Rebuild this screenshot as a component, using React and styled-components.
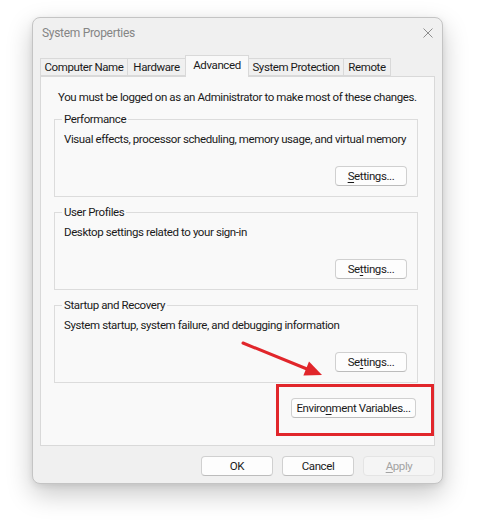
import React from 'react'
import styled, { createGlobalStyle } from 'styled-components'

const GlobalStyle = createGlobalStyle`
  html, body {
    margin: 0;
    padding: 0;
    background: #ffffff;
  }
  body {
    font-family: Roboto, "Liberation Sans", Arial, sans-serif;
    font-size: 11.5px;
    letter-spacing: -0.4px;
    color: #1a1a1a;
  }
`

const Page = styled.div`
  width: 483px;
  height: 531px;
  padding: 17px 0 0 32px;
  box-sizing: border-box;
  overflow: hidden;
`

const Window = styled.div`
  width: 411px;
  height: 467px;
  box-sizing: border-box;
  border: 1px solid #c4c4c4;
  border-radius: 8px;
  background: #f0f0f0;
  box-shadow: 0 10px 26px rgba(0, 0, 0, 0.22), 0 2px 6px rgba(0, 0, 0, 0.08);
  display: flex;
  flex-direction: column;
`

const TitleBar = styled.div`
  height: 30px;
  display: flex;
  align-items: center;
  justify-content: space-between;
  padding: 0 9px 0 9px;
`

const Title = styled.span`
  color: #858585;
  font-size: 12px;
  letter-spacing: -0.3px;
`

const Close = styled.svg`
  width: 10px;
  height: 10px;
  stroke: #8e8e8e;
  stroke-width: 1;
`

const TabRow = styled.div`
  margin: 7px 0 0 8px;
  height: 21px;
  display: flex;
  align-items: flex-end;
`

const Tab = styled.div`
  width: ${p => p.$w}px;
  height: ${p => (p.$active ? 22 : 18)}px;
  box-sizing: border-box;
  margin-bottom: ${p => (p.$active ? -1 : 0)}px;
  margin-left: -1px;
  border: 1px solid #d9d9d9;
  border-bottom: ${p => (p.$active ? 'none' : '1px solid #d9d9d9')};
  background: ${p => (p.$active ? '#f9f9f9' : '#f0f0f0')};
  display: flex;
  align-items: center;
  justify-content: center;
  padding-bottom: ${p => (p.$active ? 3 : 0)}px;
  position: relative;
  z-index: ${p => (p.$active ? 2 : 0)};
  white-space: nowrap;
`

const Panel = styled.div`
  margin-left: 7px;
  width: 395px;
  height: 370px;
  box-sizing: border-box;
  border: 1px solid #d9d9d9;
  background: #f9f9f9;
  padding: 12px 0 0 13px;
  position: relative;
`

const Intro = styled.div`
  line-height: 16px;
  padding-left: 4px;
  margin-bottom: 6px;
  white-space: nowrap;
`

const Group = styled.fieldset`
  width: 364px;
  box-sizing: border-box;
  margin: 0 0 7px 0;
  padding: 0 10px 10px 9px;
  border: 1px solid #dcdcdc;
  min-width: 0;
`

const Legend = styled.legend`
  line-height: 16px;
  padding: 0 2px;
  margin-left: -2px;
`

const Desc = styled.div`
  line-height: 16px;
  margin-top: 4px;
  white-space: nowrap;
`

const ButtonRow = styled.div`
  display: flex;
  justify-content: flex-end;
  margin-top: ${p => p.$top || 0}px;
  padding-right: ${p => p.$right || 0}px;
`

const Button = styled.button`
  width: ${p => p.$w || 72}px;
  height: 20px;
  box-sizing: border-box;
  border: 1px solid ${p => (p.disabled ? '#e4e4e4' : '#d0d0d0')};
  border-bottom-color: ${p => (p.disabled ? '#e4e4e4' : '#bcbcbc')};
  border-radius: 4px;
  background: ${p => (p.disabled ? '#f5f5f5' : '#fdfdfd')};
  color: ${p => (p.disabled ? '#a3a3a3' : '#1a1a1a')};
  font-family: inherit;
  font-size: inherit;
  letter-spacing: inherit;
  padding: 0;
  line-height: 16px;
  white-space: nowrap;
`

const U = styled.span`
  text-decoration: underline;
  text-underline-offset: 2px;
`

const Highlight = styled.div`
  position: absolute;
  left: 235px;
  top: 307px;
  width: 158px;
  height: 52px;
  box-sizing: border-box;
  border: 3px solid #e1262b;
  pointer-events: none;
`

const Arrow = styled.svg`
  position: absolute;
  left: 199px;
  top: 261px;
  width: 90px;
  height: 45px;
  overflow: visible;
`

const Footer = styled.div`
  display: flex;
  justify-content: flex-end;
  gap: 9px;
  margin-top: 10px;
  padding-right: 7px;
`

const groups = [
  {
    title: 'Performance',
    desc: 'Visual effects, processor scheduling, memory usage, and virtual memory',
    btn: <><U>S</U>ettings...</>,
  },
  {
    title: 'User Profiles',
    desc: 'Desktop settings related to your sign-in',
    btn: <>Se<U>t</U>tings...</>,
  },
  {
    title: 'Startup and Recovery',
    desc: 'System startup, system failure, and debugging information',
    btn: <>Se<U>t</U>tings...</>,
  },
]

const tabs = [
  { label: 'Computer Name', w: 88 },
  { label: 'Hardware', w: 59 },
  { label: 'Advanced', w: 64, active: true },
  { label: 'System Protection', w: 96 },
  { label: 'Remote', w: 48 },
]

export default function App() {
  return (
    <>
      <GlobalStyle />
      <Page>
        <Window>
          <TitleBar>
            <Title>System Properties</Title>
            <Close viewBox="0 0 10 10">
              <path d="M0.5 0.5 L9.5 9.5 M9.5 0.5 L0.5 9.5" />
            </Close>
          </TitleBar>
          <TabRow>
            {tabs.map(t => (
              <Tab key={t.label} $w={t.w} $active={t.active}>{t.label}</Tab>
            ))}
          </TabRow>
          <Panel>
            <Intro>You must be logged on as an Administrator to make most of these changes.</Intro>
            {groups.map(g => (
              <Group key={g.title}>
                <Legend>{g.title}</Legend>
                <Desc>{g.desc}</Desc>
                <ButtonRow $top={19}>
                  <Button>{g.btn}</Button>
                </ButtonRow>
              </Group>
            ))}
            <ButtonRow $top={15} $right={18}>
              <Button $w={125}>Enviro<U>n</U>ment Variables...</Button>
            </ButtonRow>
            <Highlight />
            <Arrow viewBox="0 0 90 45">
              <line x1="3" y1="5" x2="67" y2="31" stroke="#e1262b" strokeWidth="3" strokeLinecap="round" />
              <polygon points="82,37 63.4,37.6 69,23.6" fill="#e1262b" />
            </Arrow>
          </Panel>
          <Footer>
            <Button>OK</Button>
            <Button>Cancel</Button>
            <Button disabled><U>A</U>pply</Button>
          </Footer>
        </Window>
      </Page>
    </>
  )
}
